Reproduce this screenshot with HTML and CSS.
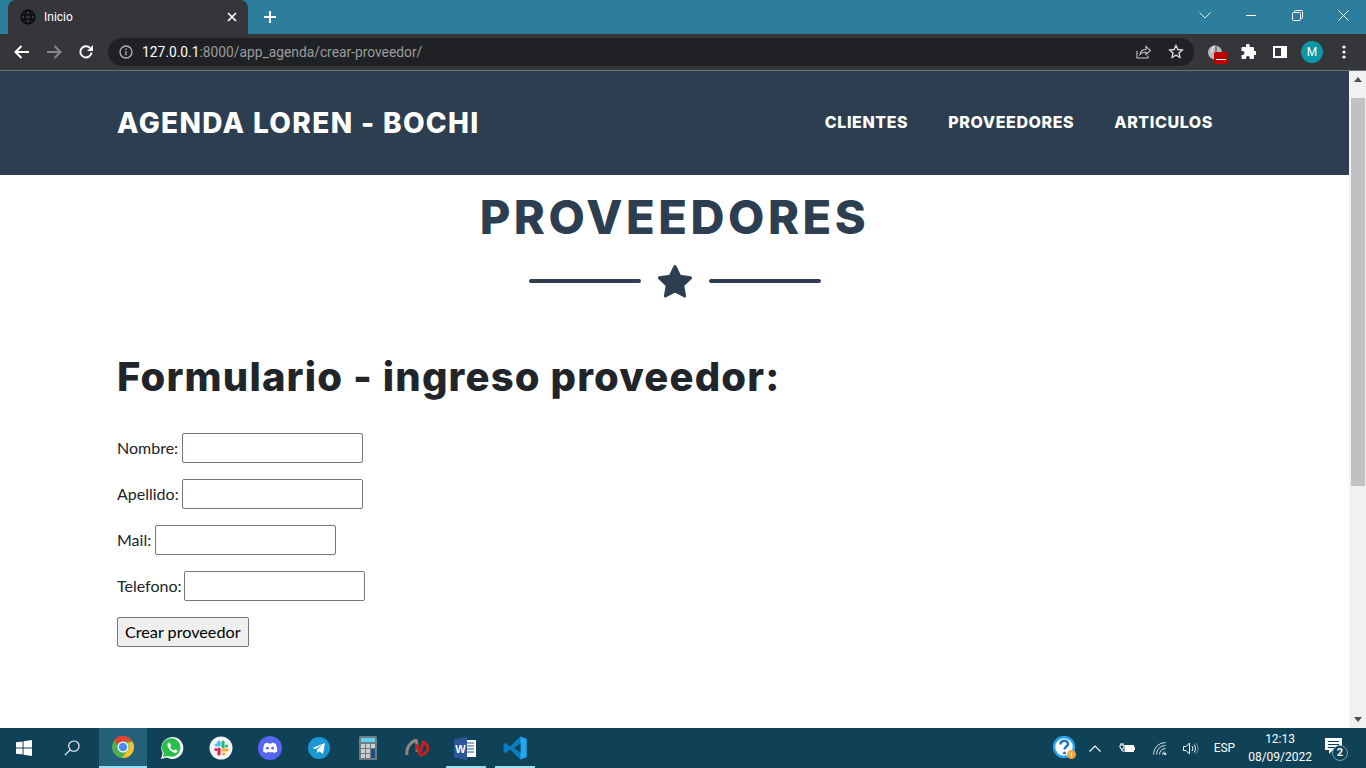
FILE: index.html
```html
<!DOCTYPE html>
<html lang="es">
<head>
<meta charset="utf-8">
<title>Inicio</title>
<link rel="stylesheet" href="styles.css">
</head>
<body>
<div class="screen">
  <header class="titlebar">
    <div class="tab">
      <svg class="tab-globe" width="16" height="16" viewBox="0 0 16 16" fill="none" stroke="#0b0b0c" stroke-width="1.5"><circle cx="8" cy="8" r="6.8"/><ellipse cx="8" cy="8" rx="3" ry="6.8"/><path d="M1.3 5.7h13.4M1.3 10.3h13.4"/></svg>
      <span class="tab-title">Inicio</span>
      <svg class="tab-close" width="10" height="10" viewBox="0 0 10 10" stroke="#fff" stroke-width="1.7"><path d="M1 1l8 8M9 1l-8 8"/></svg>
    </div>
    <svg class="new-tab" width="12" height="12" viewBox="0 0 12 12" stroke="#fff" stroke-width="2"><path d="M6 0v12M0 6h12"/></svg>
    <div class="window-controls">
      <span class="win-btn"><svg width="12" height="7" viewBox="0 0 12 7" fill="none" stroke="#e8eef2"><path d="M.5.5l5.5 5.5 5.5-5.5"/></svg></span>
      <span class="win-btn"><svg width="10" height="1" viewBox="0 0 10 1" stroke="#fff"><path d="M0 .5h10"/></svg></span>
      <span class="win-btn"><svg width="11" height="11" viewBox="0 0 11 11" fill="none" stroke="#fff"><rect x=".5" y="2.5" width="8" height="8" rx="1"/><path d="M2.5 2.5v-1a1 1 0 0 1 1-1h6a1 1 0 0 1 1 1v6a1 1 0 0 1-1 1h-1"/></svg></span>
      <span class="win-btn"><svg width="11" height="11" viewBox="0 0 11 11" stroke="#fff"><path d="M.5.5l10 10M10.500.5l-10 10"/></svg></span>
    </div>
  </header>

  <nav class="toolbar">
    <svg class="tool-icon" width="16" height="14" viewBox="0 0 16 14" fill="none" stroke="#fff" stroke-width="2"><path d="M15 7H2M7.500 1L1.500 7l6 6"/></svg>
    <svg class="tool-icon" width="16" height="14" viewBox="0 0 16 14" fill="none" stroke="#85878a" stroke-width="2"><path d="M1 7h13M8.500 1l6 6-6 6"/></svg>
    <svg class="tool-icon" width="16" height="16" viewBox="0 0 16 16" fill="none"><path d="M13.500 8.500A5.600 5.600 0 1 1 11.800 3.800" stroke="#fff" stroke-width="2"/><path d="M15 1v6H9z" fill="#fff"/></svg>
    <div class="omnibox">
      <svg width="14" height="14" viewBox="0 0 14 14" fill="none" stroke="#b4b6b8" stroke-width="1.3"><circle cx="7" cy="7" r="6"/><path d="M7 6v4.200M7 3.600v1.300"/></svg>
      <span class="url"><span class="url-host">127.0.0.1</span>:8000/app_agenda/crear-proveedor/</span>
      <svg class="omni-share" width="15" height="15" viewBox="0 0 15 15" fill="none" stroke="#c4c6c8" stroke-width="1.1"><path d="M1 7v7h11v-2.500"/><path d="M4 10.500c.5-3.500 3-5 6-5V2.500l4.500 4-4.500 4V8c-2.500 0-4.500.8-6 2.500z"/></svg>
      <svg class="omni-star" width="16" height="15" viewBox="0 0 16 15" fill="none" stroke="#d8d9da" stroke-width="1.4"><path d="M8 1.500l1.900 4 4.400.5-3.300 3 .9 4.400L8 11.200l-3.900 2.200.9-4.400-3.300-3 4.400-.5z"/></svg>
    </div>
    <div class="extensions">
      <span class="ext-tomato">
        <svg width="16" height="16" viewBox="0 0 16 16"><circle cx="8" cy="8.500" r="7" fill="#b9b9b9"/><path d="M5 8.500a4 5 0 0 1 3-6.500" fill="none" stroke="#e2e2e2" stroke-width="1.500"/><path d="M9 1v7" stroke="#6d6d6d" stroke-width="1.500"/></svg>
        <span class="ext-badge"></span>
      </span>
      <svg class="ext-puzzle" width="16" height="16" viewBox="0 0 16 16" fill="#fff"><path d="M6 1.500a1.800 1.800 0 0 1 3.600 0V3H13a1 1 0 0 1 1 1v3h1a2 2 0 0 1 0 4h-1v3a1 1 0 0 1-1 1H9.800v-1a1.900 1.900 0 0 0-3.800 0v1H2.500a1 1 0 0 1-1-1v-3h1a2 2 0 0 0 0-4h-1V4a1 1 0 0 1 1-1H6z"/></svg>
      <svg class="ext-panel" width="14" height="12" viewBox="0 0 14 12"><path fill="#fff" d="M0 0h14v12H0z"/><path fill="#35363a" d="M2 2h6v8H2z"/></svg>
      <span class="avatar">M</span>
      <svg width="4" height="14" viewBox="0 0 4 14" fill="#fff"><circle cx="2" cy="2" r="1.600"/><circle cx="2" cy="7" r="1.600"/><circle cx="2" cy="12" r="1.600"/></svg>
    </div>
  </nav>

  <div class="viewport">
    <main class="page">
      <header class="site-nav">
        <a class="brand">AGENDA LOREN - BOCHI</a>
        <ul class="nav-links">
          <li>CLIENTES</li>
          <li>PROVEEDORES</li>
          <li>ARTICULOS</li>
        </ul>
      </header>
      <section class="content">
        <h1 class="page-title">PROVEEDORES</h1>
        <div class="divider">
          <span class="divider-line"></span>
          <svg class="divider-star" width="36" height="34" viewBox="0 0 36 34"><path fill="#2c3e50" stroke="#2c3e50" stroke-width="3" stroke-linejoin="round" d="M18 2.500l4.800 9.800 10.700 1.500-7.800 7.500 1.900 10.700-9.600-5.100-9.600 5.100 1.900-10.700-7.800-7.500 10.700-1.500z"/></svg>
          <span class="divider-line"></span>
        </div>
        <h2 class="form-title">Formulario - ingreso proveedor:</h2>
        <form class="form">
          <p class="field field-wide"><label>Nombre:</label> <input type="text"></p>
          <p class="field"><label>Apellido:</label> <input type="text"></p>
          <p class="field field-wide"><label>Mail:</label> <input type="text"></p>
          <p class="field field-tight"><label>Telefono:</label> <input type="text"></p>
          <button type="button" class="submit">Crear proveedor</button>
        </form>
      </section>
    </main>
    <aside class="scrollbar">
      <span class="arrow-up"></span>
      <span class="thumb"></span>
      <span class="arrow-down"></span>
    </aside>
  </div>

  <footer class="taskbar">
    <div class="task-start">
      <svg width="16" height="16" viewBox="0 0 17 17" fill="#fff"><path d="M0 2.500l7-1v6.500H0zM8 1.300L17 0v8H8zM0 9h7v6.500l-7-1zM8 9h9v8l-9-1.300z"/></svg>
    </div>
    <div class="task-search">
      <svg width="16" height="16" viewBox="0 0 17 17" fill="none" stroke="#fff" stroke-width="1.200"><circle cx="10.500" cy="6.500" r="5.500"/><path d="M6.500 10.500L1 16"/></svg>
    </div>
    <div class="task-app task-active">
      <svg width="24" height="24" viewBox="0 0 24 24"><circle cx="12" cy="12" r="11" fill="#4caf50"/><path d="M12 1a11 11 0 0 1 9.500 5.500H12a5.500 5.500 0 0 0-5.200 3.700L3 5a11 11 0 0 1 9-4z" fill="#e2452f"/><path d="M21.500 6.500A11 11 0 0 1 11 23l4.800-6.800A5.500 5.500 0 0 0 16.500 8z" fill="#f5c02c"/><circle cx="12" cy="12" r="5.500" fill="#fff"/><circle cx="12" cy="12" r="4.200" fill="#4a8af4"/></svg>
    </div>
    <div class="task-app">
      <svg width="24" height="24" viewBox="0 0 24 24"><path d="M1 23l1.600-5.800A11 11 0 1 1 6.900 21.600z" fill="#fff"/><path d="M2.900 21l1-3.700A9.300 9.300 0 1 1 7.400 20z" fill="#27c04a"/><path d="M8.500 6.500c-1.500 1-1.500 3 0 5.500s4 4.500 6.500 5c1.500 0 2.500-1 2.700-2.200l-2.700-1.500-1.200 1.300c-1.500-.5-3-2-3.700-3.700l1.100-1.200-1.300-2.900z" fill="#fff"/></svg>
    </div>
    <div class="task-app">
      <svg width="24" height="24" viewBox="0 0 24 24"><circle cx="12" cy="12" r="11.500" fill="#f4f4f4"/><g stroke-width="3.200" stroke-linecap="round"><path d="M10 6v3H7.500" stroke="#36c5f0"/><path d="M14 11V6" stroke="#2eb67d"/><path d="M14 14h4" stroke="#ecb22e"/><path d="M10 13v5" stroke="#e01e5a"/><path d="M7 13.500h.1" stroke="#e01e5a"/><path d="M17.500 10h.1" stroke="#2eb67d"/><path d="M14.500 18h.1" stroke="#ecb22e"/></g></svg>
    </div>
    <div class="task-app">
      <svg width="24" height="24" viewBox="0 0 24 24"><circle cx="12" cy="12" r="12" fill="#5865f2"/><path d="M6.500 7.800C8 7 9 6.800 9.800 6.700l.4.800h3.600l.4-.8c.8.100 1.800.3 3.300 1.100 1.300 2.400 1.900 5 1.700 7.600-1.200.9-2.300 1.400-3.400 1.700l-.8-1.200-1 .3h-3.600l-1-.3-.8 1.200c-1.100-.3-2.200-.8-3.400-1.700-.2-2.600.4-5.200 1.300-7.600z" fill="#fff"/><circle cx="9.400" cy="12.200" r="1.400" fill="#5865f2"/><circle cx="14.600" cy="12.200" r="1.400" fill="#5865f2"/></svg>
    </div>
    <div class="task-app">
      <svg width="22" height="22" viewBox="0 0 22 22"><circle cx="11" cy="11" r="11" fill="#1d97d4"/><path d="M4.500 11L17 6l-2 11-3.800-2.800-1.800 1.800-.4-3.200 5.500-5-7 4.200z" fill="#fff"/></svg>
    </div>
    <div class="task-app">
      <svg width="18" height="24" viewBox="0 0 18 24"><rect width="18" height="24" rx="1.500" fill="#6f7b82"/><rect x="2" y="2" width="14" height="4" fill="#5fd4ee"/><g fill="#c9ced1"><rect x="2" y="8" width="4" height="4"/><rect x="7" y="8" width="4" height="4"/><rect x="12" y="8" width="4" height="4"/><rect x="2" y="13" width="4" height="4"/><rect x="7" y="13" width="4" height="4"/><rect x="2" y="18" width="4" height="4"/><rect x="7" y="18" width="4" height="4"/></g><rect x="12" y="13" width="4" height="9" fill="#1d4f8f"/></svg>
    </div>
    <div class="task-app">
      <svg width="24" height="18" viewBox="0 0 24 18" fill="none"><path d="M2 16C1 9 5 3 11 1c1 3 1.500 7 1 12" stroke="#93857a" stroke-width="3"/><path d="M11 5l3.500 9 4-11c3 2 5 5 4 8-1 2.500-4 4.500-7 5.500" stroke="#c62026" stroke-width="3"/></svg>
    </div>
    <div class="task-app task-open">
      <svg width="23" height="23" viewBox="0 0 23 23"><path d="M10 3h12v17H10z" fill="#fff"/><path d="M13 6h7M13 9h7M13 12h7M13 15h7" stroke="#2b579a"/><path d="M0 2.500L13 0v23L0 20.500z" fill="#2b579a"/><text class="word-letter" x="6.500" y="15.500" text-anchor="middle">W</text></svg>
    </div>
    <div class="task-app task-open">
      <svg width="24" height="24" viewBox="0 0 24 24"><path d="M17.500.5L7 10.500 2.500 7 .5 8v8l2 1L7 13.500l10.500 10 6-2.500V3z" fill="#0a7cc1"/><path d="M17.500.5L23.500 3v18l-6 2.500z" fill="#22a7f0"/><path d="M17.500 7.500L11 12l6.500 4.500z" fill="#0f4257"/></svg>
    </div>
    <div class="tray">
      <span class="tray-help">
        <svg width="24" height="24" viewBox="0 0 24 24"><circle cx="11" cy="11" r="10" fill="#fff" stroke="#26a3e8" stroke-width="2.500"/><path d="M7.500 8.500c0-5 7.500-5 7.500-.5 0 2.500-3.500 2.500-3.500 5.500" fill="none" stroke="#1976c8" stroke-width="2.500"/><circle cx="11.500" cy="17" r="1.500" fill="#1976c8"/><circle cx="18.500" cy="18.500" r="4.500" fill="#f2a63a"/><path d="M18.500 16.500v4" stroke="#fff" stroke-width="1.200"/></svg>
      </span>
      <svg class="tray-chevron" width="12" height="7" viewBox="0 0 12 7" fill="none" stroke="#fff" stroke-width="1.200"><path d="M.5 6.500L6 1l5.500 5.500"/></svg>
      <svg class="tray-power" width="16" height="10" viewBox="0 0 16 10"><path d="M2 0v2M4 0v2M1 2h4v2a2 2 0 0 1-4 0zM3 6v2h2" stroke="#fff" fill="none"/><rect x="5.500" y="2" width="9.500" height="7" fill="#fff"/><rect x="15" y="4" width="1" height="3" fill="#fff"/></svg>
      <svg class="tray-wifi" width="14" height="13" viewBox="0 0 14 13" fill="none" stroke="#dbe3e7"><path d="M.5 12.500a12 12 0 0 1 12-12M3.500 12.500a9 9 0 0 1 9-9M6.500 12.500a6 6 0 0 1 6-6M9.500 12.500a3 3 0 0 1 2-2.800"/><circle cx="12" cy="12" r="1" fill="#fff"/></svg>
      <svg class="tray-sound" width="16" height="13" viewBox="0 0 16 13" fill="none" stroke="#fff"><path d="M.5 4.500h2.500l3.500-3.500v11L3 8.500H.500z"/><path d="M9 4a4 4 0 0 1 0 5M11 2.500a6 6 0 0 1 0 8"/><path d="M13 1a9 9 0 0 1 0 11" stroke="#7b929e"/></svg>
      <span class="tray-lang">ESP</span>
      <span class="tray-clock"><span>12:13</span><span>08/09/2022</span></span>
      <span class="tray-notify">
        <svg width="17" height="16" viewBox="0 0 17 16"><path d="M0 0h17v12H8l-4 4v-4H0z" fill="#fff"/><path d="M3 3.500h11M3 6.500h11M3 9.500h7" stroke="#0f4257"/></svg>
        <span class="notify-count">2</span>
      </span>
    </div>
  </footer>
</div>
</body>
</html>
```

FILE: styles.css
```css
* { box-sizing: border-box; }
html, body { margin: 0; height: 100%; overflow: hidden; }
body { font-family: "Lato", "Liberation Sans", sans-serif; background: #fff; }

.screen { width: 1366px; height: 768px; display: flex; flex-direction: column; overflow: hidden; }

/* Browser title strip */
.titlebar { height: 34px; flex: none; background: #2d7d9d; display: flex; align-items: flex-start; padding-left: 8px; }
.tab { width: 240px; height: 34px; background: #35363a; border-radius: 8px 8px 0 0; display: flex; align-items: center; padding: 0 11px 1px 12px; color: #fff; font: 12px "Roboto", "Liberation Sans", sans-serif; }
.tab-globe { margin-right: 8px; }
.tab-title { flex: 1; }
.new-tab { margin: 11px 0 0 16px; }
.window-controls { margin-left: auto; display: flex; height: 30px; }
.win-btn { width: 46px; height: 30px; display: flex; align-items: center; justify-content: center; }

/* Browser toolbar */
.toolbar { height: 37px; flex: none; background: #35363a; border-bottom: 1px solid #6e7073; display: flex; align-items: center; padding: 0 0 1px 14px; }
.tool-icon { margin-right: 16px; flex: none; }
.omnibox { width: 1086px; height: 28px; margin-left: -2px; background: #202124; border-radius: 14px; display: flex; align-items: center; padding: 0 10px 0 11px; }
.url { margin-left: 9px; font: 13.8px "Roboto", "Liberation Sans", sans-serif; color: #9a9c9f; flex: 1; }
.url-host { color: #fff; }
.omni-share { margin-right: 17px; }
.extensions { display: flex; align-items: center; margin-left: 13px; }
.ext-tomato { position: relative; width: 16px; height: 15px; display: block; margin-right: 17px; }
.ext-tomato svg { display: block; }
.ext-badge { position: absolute; left: 7px; top: 8px; width: 14px; height: 12px; border-radius: 2px; background: #c00000; }
.ext-badge::after { content: ""; position: absolute; left: 2px; right: 2px; top: 7px; height: 1px; background: #fff; }
.ext-puzzle { margin-right: 17px; }
.ext-panel { margin-right: 14px; }
.avatar { width: 22px; height: 22px; border-radius: 50%; background: #0a97a6; color: #fff; font: 12px/22px "Roboto", sans-serif; text-align: center; margin-right: 19px; }

/* Page viewport */
.viewport { flex: 1; display: flex; min-height: 0; }
.page { flex: 1; min-width: 0; overflow: hidden; }
.site-nav { height: 104px; background: #2c3e50; color: #fff; display: flex; align-items: center; justify-content: space-between; padding: 0 136px 0 117px; font-family: "Inter", "Open Sans", sans-serif; }
.brand { font-size: 28px; font-weight: 800; letter-spacing: 1.35px; }
.nav-links { list-style: none; display: flex; gap: 40px; margin: 0 0 2px; padding: 0; font-size: 16px; font-weight: 800; letter-spacing: .6px; }

.content { padding: 0 117px; }
.page-title { margin: 14px 0 0; text-align: center; color: #2c3e50; font: 800 47px/56px "Inter", "Open Sans", sans-serif; letter-spacing: 3.55px; }
.divider { display: flex; justify-content: center; align-items: center; gap: 16px; margin-top: 18px; height: 36px; }
.divider-line { width: 112px; height: 4px; border-radius: 2px; background: #2c3e50; }
.form-title { margin: 54px 0 0; color: #212529; font: 800 40px/48px "Inter", "Open Sans", sans-serif; letter-spacing: 1.15px; }
.form { margin-top: 32px; font-size: 16px; color: #212529; }
.field { margin: 0 0 16px; height: 30px; display: flex; align-items: center; gap: 3px; }
.field label { padding-bottom: 2px; }
.field-wide { gap: 4px; }
.field-tight { gap: 2px; }
.field input { width: 181px; height: 30px; border: 1px solid #767676; border-radius: 2px; padding: 1px 2px; background: #fff; }
.submit { display: block; height: 30px; padding: 0 7px 2px; border: 1px solid #767676; border-radius: 2px; background: #efefef; color: #000; font: 16.2px "Lato", sans-serif; }

/* Scrollbar */
.scrollbar { width: 17px; flex: none; background: #f1f1f1; display: flex; flex-direction: column; align-items: center; }
.arrow-up { margin-top: 6px; border: 4px solid transparent; border-top: 0; border-bottom: 5px solid #505050; }
.thumb { width: 14px; height: 388px; margin-top: 16px; background: #c1c1c1; }
.arrow-down { margin-top: auto; margin-bottom: 6px; border: 4px solid transparent; border-bottom: 0; border-top: 5px solid #505050; }

/* Windows taskbar */
.taskbar { height: 40px; flex: none; background: #0f4257; display: flex; align-items: center; color: #fff; }
.task-start { width: 48px; display: flex; justify-content: center; }
.task-search { width: 48px; margin-right: 3px; display: flex; justify-content: center; }
.task-app { position: relative; width: 49px; height: 40px; display: flex; align-items: center; justify-content: center; flex: none; }
.task-active { width: 48px; background: #25607a; border-bottom: 2px solid #99e0f2; }
.task-open::after { content: ""; position: absolute; left: 5px; right: 4px; bottom: 0; height: 2px; background: #99e0f2; }
.word-letter { font: 700 11px "Liberation Sans", sans-serif; fill: #fff; }
.tray { margin-left: auto; display: flex; align-items: center; height: 40px; padding-right: 6px; }
.tray-help { display: flex; margin-right: 12px; }
.tray-chevron { margin-right: 18px; }
.tray-power { margin-right: 18px; }
.tray-wifi { margin-right: 16px; }
.tray-sound { margin-right: 15px; }
.tray-lang { font: 12px "Roboto", "Liberation Sans", sans-serif; margin-right: 13px; }
.tray-clock { display: flex; flex-direction: column; align-items: center; font: 12px/18px "Roboto", "Liberation Sans", sans-serif; margin-right: 13px; }
.tray-notify { position: relative; width: 17px; height: 24px; display: block; margin-right: 18px; padding-top: 2px; }
.tray-notify svg { display: block; }
.notify-count { position: absolute; left: 7px; top: 9px; width: 16px; height: 16px; border-radius: 50%; background: #0f4257; border: 1px solid #7fa0ae; font: 700 11px/14px "Roboto", sans-serif; text-align: center; }
```
